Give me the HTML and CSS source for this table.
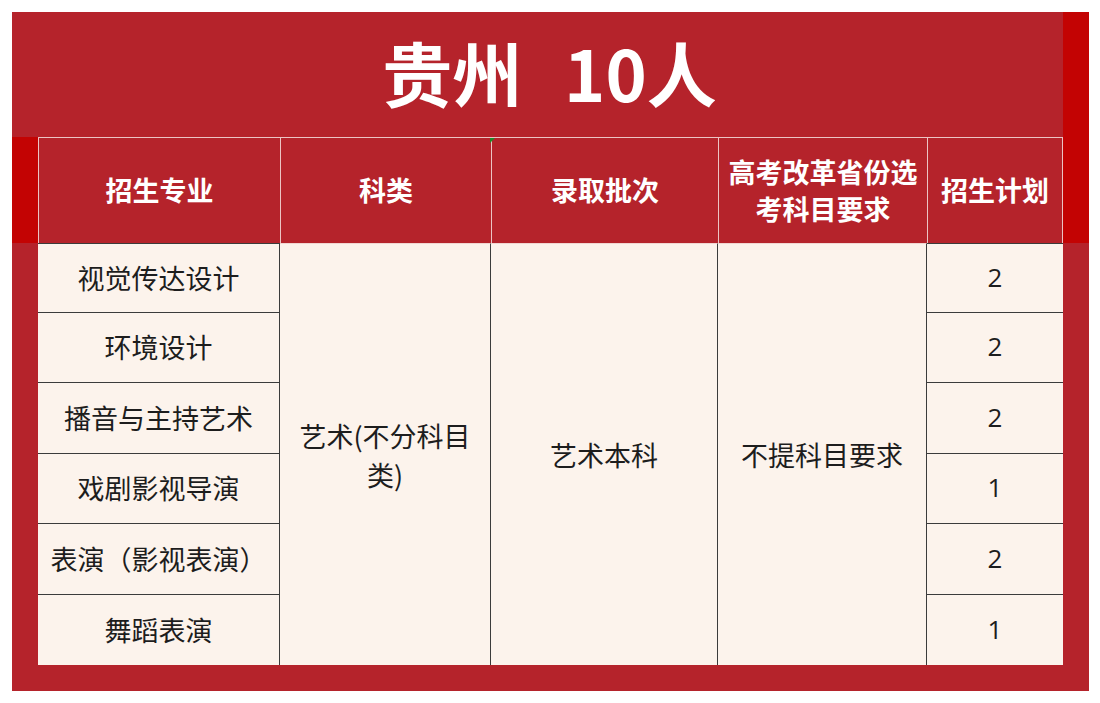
FILE: index.html
```html
<!DOCTYPE html>
<html lang="zh-CN">
<head>
<meta charset="utf-8">
<title>贵州 10人</title>
<link rel="stylesheet" href="styles.css">
</head>
<body>
<div class="frame">
  <div class="banner"><h1 class="title">贵州&nbsp;&nbsp;10人</h1></div>
  <div class="sheet">
    <div class="th">招生专业</div>
    <div class="th">科类</div>
    <div class="th marked">录取批次</div>
    <div class="th">高考改革省份选考科目要求</div>
    <div class="th last">招生计划</div>

    <div class="major first">视觉传达设计</div>
    <div class="merged c2">艺术(不分科目类)</div>
    <div class="merged c3">艺术本科</div>
    <div class="merged c4">不提科目要求</div>
    <div class="plan first">2</div>

    <div class="major">环境设计</div>
    <div class="plan">2</div>

    <div class="major">播音与主持艺术</div>
    <div class="plan">2</div>

    <div class="major">戏剧影视导演</div>
    <div class="plan">1</div>

    <div class="major">表演（影视表演）</div>
    <div class="plan">2</div>

    <div class="major end">舞蹈表演</div>
    <div class="plan end">1</div>
  </div>
</div>
</body>
</html>
```

FILE: styles.css
```css
* { box-sizing: border-box; }

html, body {
  margin: 0;
  padding: 0;
  background: #ffffff;
}

body {
  font-family: "Noto Sans CJK SC", "Noto Sans", sans-serif;
}

.frame {
  margin: 12px 0 0 12px;
  width: 1077px;
  height: 679px;
  display: flex;
  flex-direction: column;
  background:
    linear-gradient(#c30303, #c30303) right 0 top 0 / 26px 231px no-repeat,
    linear-gradient(#c30303, #c30303) left 0 top 125px / 26px 106px no-repeat,
    #b5232b;
}

.banner {
  flex: 0 0 125px;
  height: 125px;
  display: flex;
  align-items: center;
  justify-content: center;
  padding-right: 2px;
}

.title {
  margin: 0;
  color: #ffffff;
  font-size: 70px;
  font-weight: 700;
  line-height: 1;
  letter-spacing: 0;
  word-spacing: 5px;
  white-space: pre;
  padding-bottom: 6px;
}

.sheet {
  flex: 0 0 auto;
  margin: 0 26px 26px 26px;
  display: grid;
  grid-template-columns: 242px 211px 227px 209px 136px;
  grid-template-rows: 106px 70px 70px 71px 70px 71px 70px;
  background: #fcf3ec;
}

.th {
  position: relative;
  background: #b5232b;
  color: #ffffff;
  font-weight: 700;
  font-size: 27px;
  line-height: 37px;
  display: flex;
  align-items: center;
  justify-content: center;
  text-align: center;
  padding: 0 4px 2px;
  border-top: 1px solid #ecc4c4;
  border-left: 1px solid #ecc4c4;
}

.th.last { border-right: 1px solid #ecc4c4; }

.th.marked::before {
  content: "";
  position: absolute;
  left: -2px;
  top: 0;
  width: 0;
  height: 0;
  border-top: 5px solid #1f8a2a;
  border-right: 5px solid transparent;
}

.major, .merged, .plan {
  display: flex;
  align-items: center;
  justify-content: center;
  text-align: center;
  color: #1d1d1d;
  font-size: 27px;
  line-height: 39px;
  background: #fcf3ec;
}

.major {
  grid-column: 1;
  border-right: 1px solid #3b3b3b;
  border-bottom: 1px solid #3b3b3b;
  padding: 0 2px 2px;
}

.merged {
  grid-row: 2 / span 6;
  border-right: 1px solid #3b3b3b;
  border-top: 1px solid #f1d6d2;
  padding: 0 12px;
}

.merged.c2 { grid-column: 2; }
.merged.c3 { grid-column: 3; }
.merged.c4 { grid-column: 4; }

.plan {
  grid-column: 5;
  border-bottom: 1px solid #3b3b3b;
  font-family: "Open Sans", "Noto Sans", sans-serif;
  font-size: 26px;
  padding-bottom: 2px;
}

.major.first, .plan.first { border-top: 1px solid #3b3b3b; }
.major.end, .plan.end { border-bottom: none; }
```
